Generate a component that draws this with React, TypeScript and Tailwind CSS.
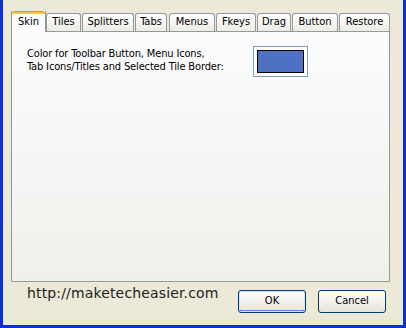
import React from "react";

const tabs: { label: string; w: string; ml: string }[] = [
  { label: "Tiles", w: "w-[35px]", ml: "ml-0" },
  { label: "Splitters", w: "w-[52px]", ml: "ml-[1px]" },
  { label: "Tabs", w: "w-[32px]", ml: "ml-[1px]" },
  { label: "Menus", w: "w-[46px]", ml: "ml-[2px]" },
  { label: "Fkeys", w: "w-[40px]", ml: "ml-[1px]" },
  { label: "Drag", w: "w-[34px]", ml: "ml-[1px]" },
  { label: "Button", w: "w-[46px]", ml: "ml-[1px]" },
  { label: "Restore", w: "w-[51px]", ml: "ml-[1px]" },
];

export default function App() {
  return (
    <div
      className="w-[406px] h-[328px] bg-[#ece9d8] border-l-[3px] border-r-[3px] border-b-[3px] border-[#0831d9] flex flex-col pt-[11px] pl-[8px] pr-[13px] text-[11px] text-black"
      style={{ fontFamily: '"DejaVu Sans Condensed", Tahoma, "Liberation Sans", sans-serif' }}
    >
      {/* tab strip */}
      <div className="flex items-end h-[20px] relative z-10">
        <div className="w-[35px] h-[21px] -mb-[1px] bg-[#fcfcfe] border-l border-r border-[#919b9c] flex flex-col">
          <div className="h-[3px] rounded-t-[3px] bg-[#ffc83c] border-t border-[#e68b2c]" />
          <div className="flex-1 flex items-center justify-center pb-[1px]">Skin</div>
        </div>
        {tabs.map((t) => (
          <div
            key={t.label}
            className={`${t.w} ${t.ml} h-[18px] border border-b-0 border-[#919b9c] rounded-t-[3px] bg-gradient-to-b from-[#ffffff] to-[#ecebe6] flex items-center justify-center`}
          >
            {t.label}
          </div>
        ))}
      </div>
      {/* panel */}
      <div className="w-[379px] h-[251px] border border-[#919b9c] bg-gradient-to-b from-[#fcfcfe] to-[#eff0eb] pt-[15px] pl-[15px] flex items-start">
        <div className="leading-[13px] w-[226px] tracking-[-0.15px]">
          Color for Toolbar Button, Menu Icons,
          <br />
          Tab Icons/Titles and Selected Tile Border:
        </div>
        <div className="w-[55px] h-[31px] border border-[#7f9db9] bg-white p-[3px] mt-[-1px]">
          <div className="w-full h-full border border-black bg-[#4e71c4]" />
        </div>
      </div>
      {/* bottom */}
      <div className="flex items-start pt-[1px]">
        <div
          className="ml-[16px] text-[14px] text-[#222] tracking-[0.15px]"
          style={{ fontFamily: '"DejaVu Sans", Verdana, sans-serif' }}
        >
          http://maketecheasier.com
        </div>
        <div className="ml-auto flex gap-[12px] pt-[7px] pr-[4px]">
          <button className="w-[68px] h-[23px] rounded-[3px] border border-[#003c74] bg-gradient-to-b from-[#ffffff] to-[#e6e3d8] shadow-[inset_0_0_0_1px_#cee7ff,inset_0_-1px_0_1px_#6982ee] text-[11px]">
            OK
          </button>
          <button className="w-[68px] h-[23px] rounded-[3px] border border-[#003c74] bg-gradient-to-b from-[#ffffff] to-[#e6e3d8] text-[11px]">
            Cancel
          </button>
        </div>
      </div>
    </div>
  );
}
